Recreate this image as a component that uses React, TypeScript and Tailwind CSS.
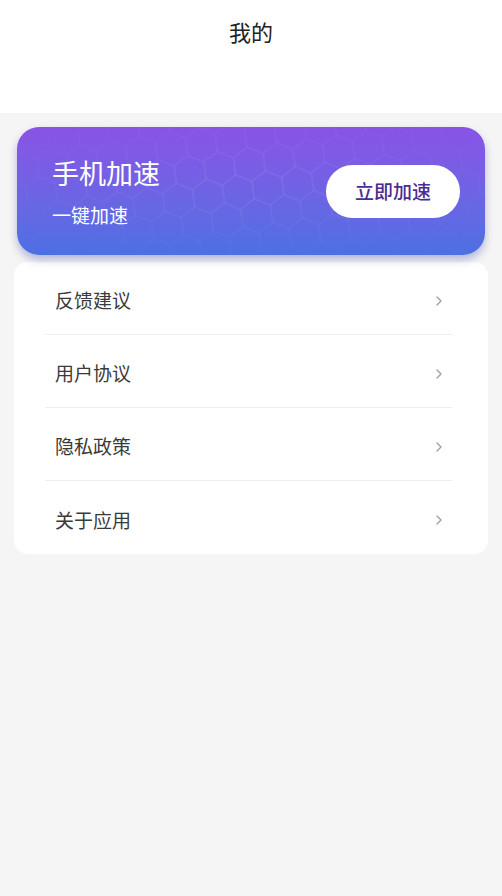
import { ChevronRight } from "lucide-react";

const items = ["反馈建议", "用户协议", "隐私政策", "关于应用"];

const HexPattern = () => (
  <svg className="absolute inset-0 h-full w-full" xmlns="http://www.w3.org/2000/svg">
    <defs>
      <pattern id="hex" width="30" height="52" patternUnits="userSpaceOnUse" patternTransform="rotate(-8)">
        <path
          d="M15 0 L30 8.66 L30 25.98 L15 34.64 L0 25.98 L0 8.66 Z M15 34.64 L15 52"
          fill="none"
          stroke="white"
          strokeWidth="1"
        />
      </pattern>
      <radialGradient id="fade" cx="50%" cy="45%" r="55%">
        <stop offset="0%" stopColor="white" stopOpacity="1" />
        <stop offset="100%" stopColor="white" stopOpacity="0.2" />
      </radialGradient>
      <mask id="hexMask">
        <rect width="100%" height="100%" fill="url(#fade)" />
      </mask>
    </defs>
    <rect width="100%" height="100%" fill="url(#hex)" opacity="0.14" mask="url(#hexMask)" />
  </svg>
);

export default function App() {
  return (
    <div
      className="min-h-[896px] bg-[#f5f5f5]"
      style={{ fontFamily: '"Noto Sans CJK SC", "Noto Sans", sans-serif' }}
    >
      {/* Header */}
      <div className="h-[113px] bg-white flex justify-center pt-[15px]">
        <h1 className="text-[22px] leading-[32px] text-[#222]">我的</h1>
      </div>

      {/* Speed up card */}
      <div className="px-[17px] pt-[14px]">
        <div className="relative h-[128px] rounded-[22px] overflow-hidden bg-gradient-to-b from-[#8953e6] to-[#4b70e2] shadow-[0_5px_8px_rgba(60,70,160,0.35)]">
          <HexPattern />
          <div className="relative h-full flex items-center justify-between pl-[35px] pr-[25px]">
            <div className="flex flex-col">
              <span className="text-[27px] leading-[36px] text-white">手机加速</span>
              <span className="mt-[11px] text-[19px] leading-[26px] text-white">一键加速</span>
            </div>
            <button className="w-[134px] h-[53px] rounded-full bg-white text-[19px] font-medium text-[#4b2d8f]">
              立即加速
            </button>
          </div>
        </div>
      </div>

      {/* Menu list */}
      <div className="mx-[14px] mt-[7px] bg-white rounded-[14px]">
        {items.map((label, i) => (
          <div key={label} className="pl-[31px] pr-[36px]">
            <div
              className={`h-[73px] pt-[5px] flex items-center justify-between ${
                i < items.length - 1 ? "border-b border-[#eeeeee]" : ""
              }`}
            >
              <span className="pl-[10px] text-[19px] text-[#3a3a3a]">{label}</span>
              <ChevronRight className="w-[16px] h-[16px] text-[#a0a0a0] mr-[5px]" strokeWidth={2} />
            </div>
          </div>
        ))}
      </div>
    </div>
  );
}
